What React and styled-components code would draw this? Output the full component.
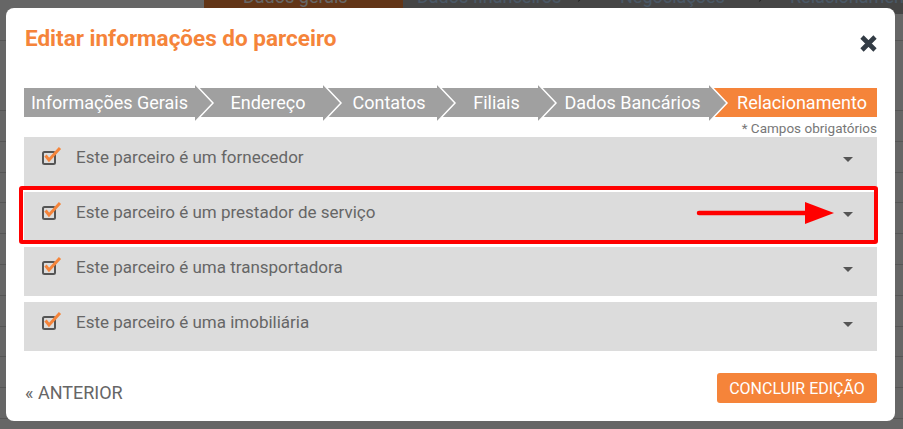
import React from 'react';
import styled, { createGlobalStyle } from 'styled-components';

const ORANGE = '#f5843a';

const GlobalStyle = createGlobalStyle`
  html, body {
    margin: 0;
    padding: 0;
    background: #fff;
  }
  body {
    font-family: Roboto, "Liberation Sans", Arial, sans-serif;
    overflow: hidden;
  }
`;

/* ---------- page behind the modal ---------- */

const Page = styled.div`
  width: 903px;
  height: 429px;
  overflow: hidden;
  background: #fff;
`;

const BackSteps = styled.div`
  display: flex;
  height: 36px;
  margin: -22px 0 0 204px;
  background: #adadad;
  font-size: 18px;
`;

const BackStep = styled.div`
  position: relative;
  flex: 0 0 ${({ $w }) => $w}px;
  box-sizing: border-box;
  padding-left: ${({ $pl }) => $pl}px;
  display: flex;
  align-items: center;
  white-space: nowrap;
  background: ${({ $active }) => ($active ? ORANGE : 'transparent')};
  color: ${({ $active }) => ($active ? '#fff' : '#b9dcff')};

  &::after {
    content: '';
    position: absolute;
    right: 4px;
    top: 13px;
    width: 8px;
    height: 8px;
    border-top: 1.5px solid #555;
    border-right: 1.5px solid #555;
    transform: rotate(45deg);
    display: ${({ $active }) => ($active ? 'none' : 'block')};
  }
`;

const BackTable = styled.div`
  display: flex;
  flex-direction: column;
`;

const BackRow = styled.div`
  height: ${({ $h }) => $h}px;
  border-bottom: 1px solid #d8d8d8;
  box-sizing: border-box;
`;

/* ---------- modal ---------- */

const Overlay = styled.div`
  position: fixed;
  inset: 0;
  background: rgba(0, 0, 0, 0.6);
  display: flex;
  align-items: flex-start;
  padding: 8px 0 0 6px;
`;

const Modal = styled.div`
  width: 889px;
  height: 413px;
  box-sizing: border-box;
  background: #fff;
  border-radius: 8px;
  padding: 18px 18px 18px;
  display: flex;
  flex-direction: column;
`;

const Header = styled.div`
  display: flex;
  justify-content: space-between;
  align-items: flex-start;
  padding-left: 1px;
`;

const Title = styled.h1`
  margin: 0;
  font-size: 22.5px;
  line-height: 25px;
  font-weight: 700;
  color: ${ORANGE};
`;

const CloseButton = styled.button`
  width: 17px;
  height: 17px;
  margin-top: 9px;
  padding: 0;
  border: none;
  background: none;
  cursor: pointer;
  display: flex;
`;

const Steps = styled.div`
  display: flex;
  height: 30px;
  margin-top: 36px;
  font-size: 18px;
  color: #fff;
`;

const Step = styled.div`
  position: relative;
  flex: 0 0 ${({ $w }) => $w}px;
  box-sizing: border-box;
  padding-left: ${({ $first }) => ($first ? 0 : 18)}px;
  display: flex;
  align-items: center;
  justify-content: center;
  white-space: nowrap;
  background: ${({ $active }) => ($active ? ORANGE : '#a0a0a0')};
`;

const StepArrow = styled.svg`
  position: absolute;
  right: -18px;
  top: -4px;
  z-index: 2;
  overflow: visible;
`;

const Required = styled.div`
  margin: 3px 0 1px;
  text-align: right;
  font-size: 13.5px;
  line-height: 16px;
  color: #777;
`;

const Rows = styled.div`
  display: flex;
  flex-direction: column;
  gap: 6px;
`;

const Row = styled.div`
  position: relative;
  height: 49px;
  box-sizing: border-box;
  padding: 0 24px 0 17px;
  display: flex;
  align-items: flex-start;
  background: #dcdcdc;
`;

const Check = styled.svg`
  margin-top: 9px;
  flex-shrink: 0;
`;

const RowLabel = styled.span`
  flex: 1;
  margin: 10px 0 0 13px;
  font-size: 17px;
  line-height: 20px;
  color: #666;
`;

const Caret = styled.span`
  margin-top: 20px;
  width: 0;
  height: 0;
  border-left: 5px solid transparent;
  border-right: 5px solid transparent;
  border-top: 5px solid #555;
`;

const Highlight = styled.div`
  position: absolute;
  top: -6px;
  left: -5px;
  right: -1px;
  bottom: -3px;
  border: 4px solid #ff0000;
  border-radius: 3px;
  pointer-events: none;
`;

const Pointer = styled.svg`
  position: absolute;
  left: 672px;
  top: 9px;
`;

const Footer = styled.div`
  display: flex;
  justify-content: space-between;
  align-items: center;
  margin-top: 22px;
  padding-left: 1px;
`;

const BackLink = styled.a`
  padding-top: 8px;
  font-size: 18px;
  line-height: 21px;
  color: #666;
  text-decoration: none;
  cursor: pointer;
`;

const PrimaryButton = styled.button`
  width: 160px;
  height: 30px;
  padding: 0;
  border: none;
  border-radius: 3px;
  background: ${ORANGE};
  color: #fff;
  font-family: inherit;
  font-size: 16px;
  cursor: pointer;
`;

const steps = [
  { label: 'Informações Gerais', w: 171 },
  { label: 'Endereço', w: 128 },
  { label: 'Contatos', w: 114 },
  { label: 'Filiais', w: 101 },
  { label: 'Dados Bancários', w: 171 },
  { label: 'Relacionamento', w: 168, active: true },
];

const options = [
  'Este parceiro é um fornecedor',
  'Este parceiro é um prestador de serviço',
  'Este parceiro é uma transportadora',
  'Este parceiro é uma imobiliária',
];

const backRows = [27, 70, 30.8, 30.8, 30.8, 30.8, 30.8, 30.8, 30.8, 30.8, 30.8, 30.8];

const CheckIcon = () => (
  <Check width="22" height="20" viewBox="0 0 22 20">
    <rect x="2" y="6" width="12" height="12" rx="1.5" fill="none" stroke="#555" strokeWidth="2" />
    <polyline points="4.5,9.5 8,14 19,2" fill="none" stroke={ORANGE} strokeWidth="3" strokeLinejoin="miter" />
  </Check>
);

export default function App() {
  return (
    <>
      <GlobalStyle />
      <Page>
        <BackSteps>
          <BackStep $w={199} $pl={39} $active>Dados gerais</BackStep>
          <BackStep $w={184} $pl={14}>Dados financeiros</BackStep>
          <BackStep $w={181} $pl={33}>Negociações</BackStep>
          <BackStep $w={160} $pl={22}>Relacionamento</BackStep>
        </BackSteps>
        <BackTable>
          {backRows.map((h, i) => (
            <BackRow key={i} $h={h} />
          ))}
        </BackTable>
      </Page>

      <Overlay>
        <Modal>
          <Header>
            <Title>Editar informações do parceiro</Title>
            <CloseButton aria-label="Fechar">
              <svg width="17" height="17" viewBox="0 0 17 17">
                <path d="M2 2 L15 15 M15 2 L2 15" stroke="#333c45" strokeWidth="4.6" />
              </svg>
            </CloseButton>
          </Header>

          <Steps>
            {steps.map((s, i) => (
              <Step key={s.label} $w={s.w} $first={i === 0} $active={s.active}>
                {s.label}
                {i < steps.length - 1 && (
                  <StepArrow width="18" height="38" viewBox="0 0 18 38">
                    <path d="M0 0 L18 19 L0 38" fill="#a0a0a0" stroke="#fff" strokeWidth="1.5" />
                  </StepArrow>
                )}
              </Step>
            ))}
          </Steps>
          <Required>* Campos obrigatórios</Required>

          <Rows>
            {options.map((text, i) => (
              <Row key={text}>
                <CheckIcon />
                <RowLabel>{text}</RowLabel>
                <Caret />
                {i === 1 && (
                  <>
                    <Highlight />
                    <Pointer width="140" height="24" viewBox="0 0 140 24">
                      <line x1="3" y1="12" x2="112" y2="12" stroke="#ff0000" strokeWidth="4.5" strokeLinecap="round" />
                      <polygon points="109,1 138,12 109,23" fill="#ff0000" />
                    </Pointer>
                  </>
                )}
              </Row>
            ))}
          </Rows>

          <Footer>
            <BackLink>« ANTERIOR</BackLink>
            <PrimaryButton>CONCLUIR EDIÇÃO</PrimaryButton>
          </Footer>
        </Modal>
      </Overlay>
    </>
  );
}
